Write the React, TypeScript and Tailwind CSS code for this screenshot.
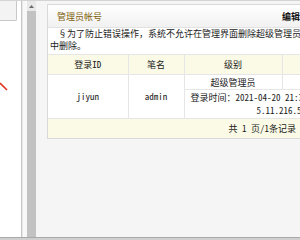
const font = "font-['Noto_Sans_Mono_CJK_SC','Noto_Sans_CJK_SC',sans-serif]";

function Sidebar() {
  return (
    <div className="w-[21px] shrink-0 flex flex-col bg-white">
      <div className="w-[17px] h-[20px] bg-[#f3f3f3] border-r border-b border-[#c8c8c8] rounded-br-[2px]" />
      <svg className="mt-[61px]" width="8" height="9" viewBox="0 0 8 9">
        <line x1="0" y1="1" x2="7" y2="8" stroke="#e0321f" strokeWidth="1.6" />
      </svg>
    </div>
  );
}

function ScrollBar() {
  return (
    <div className="w-[9px] shrink-0 flex flex-col">
      <div className="h-[10px] bg-[#e8e8e8] flex items-center justify-center">
        <svg width="5" height="3" viewBox="0 0 5 3">
          <path d="M2.5 0 L5 3 L0 3 Z" fill="#6b6b6b" />
        </svg>
      </div>
      <div className="flex-1 bg-[#c2c2c2]" />
    </div>
  );
}

function AdminPanel() {
  return (
    <div className="w-[290px] shrink-0 border border-[#d9d9d9] bg-white">
      <div className="h-[23px] flex items-center border-b border-[#e2e2e2] bg-gradient-to-b from-white to-[#f1f1f1]">
        <span className="w-[234px] shrink-0 pl-[9px] text-[#7f600c] font-medium">管理员帐号</span>
        <span className="font-bold text-[#111]">编辑</span>
      </div>
      <div className="pb-[2px] pl-[2px] leading-[12px]">
        <div className="whitespace-nowrap pl-[8px]">§为了防止错误操作，系统不允许在管理界面删除超级管理员，如需删除请在数据库</div>
        <div>中删除。</div>
      </div>
      <table className="w-full table-fixed border-collapse text-center">
        <colgroup>
          <col className="w-[80px]" />
          <col className="w-[56px]" />
          <col className="w-[98px]" />
          <col />
        </colgroup>
        <thead>
          <tr className="bg-[#fafae6]">
            <th className="h-[20px] font-normal border-t border-[#e6e6e6]">登录ID</th>
            <th className="font-normal border-t border-l border-[#e6e6e6]">笔名</th>
            <th className="font-normal border-t border-l border-[#e6e6e6]">级别</th>
            <th className="font-normal border-t border-l border-[#e6e6e6]" />
          </tr>
        </thead>
        <tbody>
          <tr>
            <td rowSpan={2} className="border-t border-[#e6e6e6]">jiyun</td>
            <td rowSpan={2} className="border-t border-l border-[#e6e6e6]">admin</td>
            <td className="h-[15px] border-t border-l border-[#e6e6e6]">超级管理员</td>
            <td className="border-t border-l border-[#e6e6e6]" />
          </tr>
          <tr>
            <td colSpan={2} className="h-[29px] border-t border-l border-[#e6e6e6] text-left leading-[13px] pl-[6px]">
              <div className="whitespace-nowrap">登录时间：2021-04-20 21:35</div>
              <div className="whitespace-nowrap pl-[66px]">5.11.216.54</div>
            </td>
          </tr>
          <tr className="bg-[#fafae6]">
            <td colSpan={4} className="h-[19px] border-t border-[#e6e6e6] text-right pr-[40px]">
              共 1 页/1条记录
            </td>
          </tr>
        </tbody>
      </table>
    </div>
  );
}

export default function App() {
  return (
    <div className={`w-[300px] h-[240px] overflow-hidden flex flex-col bg-[#f5f5f5] text-[9px] leading-[11px] text-[#1a1a1a] ${font}`}>
      <div className="h-px shrink-0 bg-[#d4d4d4]" />
      <div className="flex flex-1 min-h-0">
        <Sidebar />
        <div className="w-px shrink-0 bg-[#c6c6c6]" />
        <div className="w-[5px] shrink-0 bg-[#f8f8f8] border-l border-[#e8e8e8]" />
        <ScrollBar />
        <main className="flex-1 min-w-0 overflow-hidden pl-[11px] pt-[3px]">
          <AdminPanel />
        </main>
      </div>
      <div className="h-[3px] shrink-0 border-t border-[#a9a9a9] bg-[#cfcfcf]" />
    </div>
  );
}
